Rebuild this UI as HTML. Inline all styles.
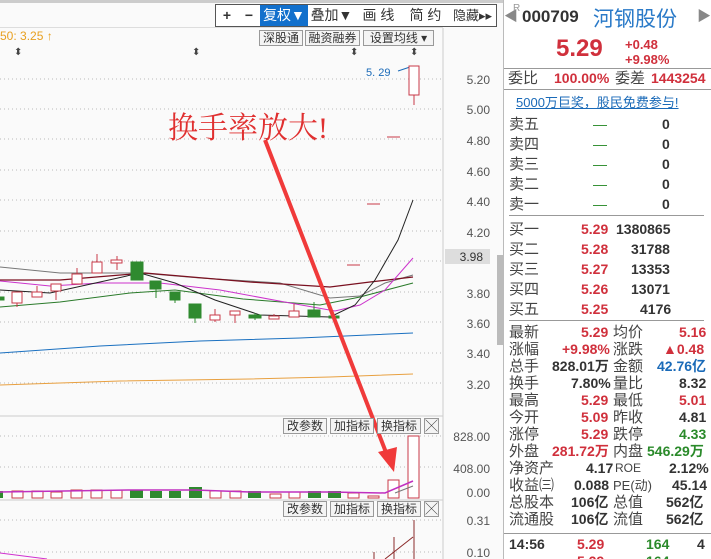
<!DOCTYPE html>
<html><head><meta charset="utf-8"><style>
*{margin:0;padding:0;box-sizing:border-box}
html,body{width:711px;height:559px;overflow:hidden}
body{background:#fafafa;font-family:"Liberation Sans","Noto Sans CJK SC",sans-serif;position:relative}
.a{position:absolute;white-space:nowrap}
.tb{position:absolute;top:4px;height:23px;border:1px solid #555;border-left:none;background:#fff;font-size:14px;color:#333;text-align:center;line-height:21px}
.sb{position:absolute;height:16px;border:1px solid #999;background:#f4f4f4;font-size:12px;color:#333;line-height:14px;text-align:center}
#rp{position:absolute;left:503px;top:0;width:208px;height:559px;background:#fff;border-left:1px solid #bbb;font-size:14px;overflow:hidden}
.r{position:absolute;left:5px;width:200px;height:17px;line-height:17px}
.r span{position:absolute}
.red{color:#d0303c;font-weight:bold}
.grn{color:#2a8a2a;font-weight:bold}
.blk{color:#333;font-weight:bold}
.lab{color:#444;font-size:15px}
</style></head><body>
<div class="a" style="left:0;top:0;width:503px;height:3px;background:#ccc"></div>
<div class="tb" style="left:215px;width:24px;border-left:1px solid #555;font-weight:bold">+</div>
<div class="tb" style="left:238px;width:23px;font-weight:bold">−</div>
<div class="tb" style="left:260px;width:49px;background:#1270cc;color:#fff">复权▼</div>
<div class="tb" style="left:308px;width:48px">叠加▼</div>
<div class="tb" style="left:355px;width:48px">画 线</div>
<div class="tb" style="left:402px;width:48px">简 约</div>
<div class="tb" style="left:449px;width:48px;font-size:13px">隐藏▸▸</div>
<div class="a" style="left:0;top:27px;width:443px;height:1px;background:#ddd"></div>
<div class="a" style="left:0;top:29px;font-size:12px;color:#e8a020">50: 3.25 ↑</div>
<div class="sb" style="left:259px;top:30px;width:44px">深股通</div>
<div class="sb" style="left:305px;top:30px;width:55px">融资融券</div>
<div class="sb" style="left:363px;top:30px;width:71px">设置均线 ▾</div>
<svg class="a" style="left:0;top:0" width="503" height="559">
<g fill="#444" font-size="10"><text x="14" y="55">⬍</text><text x="192" y="55">⬍</text><text x="350" y="55">⬍</text><text x="410" y="55">⬍</text></g>
<line x1="443" y1="28" x2="443" y2="559" stroke="#ccc"/>
<line x1="0" y1="416" x2="443" y2="416" stroke="#ccc"/><line x1="0" y1="500" x2="443" y2="500" stroke="#ccc"/>
<g stroke="#bbb" stroke-dasharray="1,3">
<line x1="0" y1="79" x2="443" y2="79"/><line x1="0" y1="109" x2="443" y2="109"/><line x1="0" y1="139" x2="443" y2="139"/><line x1="0" y1="170" x2="443" y2="170"/><line x1="0" y1="200" x2="443" y2="200"/><line x1="0" y1="231" x2="443" y2="231"/><line x1="0" y1="261" x2="443" y2="261"/><line x1="0" y1="292" x2="443" y2="292"/><line x1="0" y1="322" x2="443" y2="322"/><line x1="0" y1="353" x2="443" y2="353"/><line x1="0" y1="383" x2="443" y2="383"/>
<line x1="0" y1="436" x2="443" y2="436"/><line x1="0" y1="467" x2="443" y2="467"/><line x1="0" y1="520" x2="443" y2="520"/><line x1="0" y1="552" x2="443" y2="552"/></g>
<g font-size="12" fill="#555" text-anchor="end"><text x="490" y="84">5.20</text><text x="490" y="114">5.00</text><text x="490" y="145">4.80</text><text x="490" y="176">4.60</text><text x="490" y="206">4.40</text><text x="490" y="237">4.20</text><text x="490" y="298">3.80</text><text x="490" y="328">3.60</text><text x="490" y="358">3.40</text><text x="490" y="389">3.20</text><text x="490" y="441">828.00</text><text x="490" y="473">408.00</text><text x="490" y="497">0.00</text><text x="490" y="525">0.31</text><text x="490" y="557">0.10</text></g>
<rect x="445" y="249" width="45" height="15" fill="#ddd"/><text x="483" y="261" font-size="12" fill="#333" text-anchor="end">3.98</text>
<rect x="497" y="255" width="6" height="90" fill="#bbb"/>
<text x="366" y="76" font-size="11" fill="#1a6ab8">5. 29</text><path d="M398 71 L410 67" stroke="#1a6ab8"/>
<path d="M0 307 L60 302 L130 293 L175 290 L243 299 L320 305 L360 297 L413 283" stroke="#2a7a2a" fill="none"/>
<path d="M0 353 L100 346 L200 341 L300 338 L413 333" stroke="#1a70c0" fill="none"/>
<path d="M0 385 L120 381 L250 379 L330 377 L413 374" stroke="#e8a040" fill="none"/>
<path d="M0 267 L60 273 L140 273 L200 278 L280 283 L330 298 L360 296 L385 283 L413 275" stroke="#777" fill="none"/>
<path d="M0 280 L60 280 L145 273 L250 282 L330 287 L370 282 L413 277" stroke="#7a1020" stroke-width="1.3" fill="none"/>
<path d="M0 281 L50 286 L100 283 L160 283 L220 290 L290 303 L335 311 L360 305 L385 290 L413 258" stroke="#cc33cc" fill="none"/>
<path d="M0 290 L50 293 L100 282 L140 273 L175 283 L215 300 L260 315 L330 317 L355 305 L375 280 L398 240 L413 200" stroke="#222" fill="none"/>
<g stroke="#c83a48" fill="#fff">
<path d="M17 292V307M37 286V297M56 284V300M77 268V284M97 254V273M117 256V270M215 309V322M235 311V323M274 314V319M294 304V317M414 66V105"/>
<rect x="12" y="292" width="10" height="11"/><rect x="32" y="292" width="10" height="5"/><rect x="51" y="284" width="10" height="7"/><rect x="72" y="274" width="10" height="10"/><rect x="92" y="262" width="10" height="11"/><rect x="111" y="260" width="11" height="3"/><rect x="210" y="315" width="10" height="5"/><rect x="230" y="311" width="10" height="4"/><rect x="269" y="316" width="10" height="3"/><rect x="289" y="311" width="10" height="6"/><rect x="409" y="66" width="10" height="29"/>
<path d="M347 265H360M367 204H380M387 137H400"/></g>
<g stroke="#2f8a2f" fill="#2f8a2f">
<path d="M156 281V298M175 292V303M195 304V323M314 302V317M255 313V320"/>
<rect x="0" y="297" width="4" height="3"/><rect x="131" y="262" width="12" height="18"/><rect x="150" y="281" width="11" height="8"/><rect x="170" y="292" width="10" height="8"/><rect x="189" y="304" width="12" height="14"/><rect x="249" y="315" width="12" height="3"/><rect x="308" y="310" width="12" height="7"/><rect x="329" y="316" width="10" height="2"/></g>
<g fill="#fff" stroke="#c83a48"><rect x="12" y="491" width="11" height="7"/><rect x="32" y="491" width="11" height="7"/><rect x="51" y="492" width="11" height="6"/><rect x="71" y="490" width="11" height="8"/><rect x="91" y="490" width="11" height="8"/><rect x="111" y="490" width="11" height="8"/><rect x="210" y="491" width="11" height="7"/><rect x="230" y="491" width="11" height="7"/><rect x="270" y="494" width="11" height="4"/><rect x="289" y="492" width="11" height="6"/><rect x="348" y="493" width="11" height="5"/><rect x="368" y="496" width="11" height="2"/><rect x="388" y="480" width="11" height="18"/><rect x="408" y="436" width="11" height="62"/></g>
<g fill="#2f8a2f"><rect x="0" y="491" width="3" height="7"/><rect x="130" y="490" width="13" height="8"/><rect x="150" y="491" width="12" height="7"/><rect x="169" y="491" width="12" height="7"/><rect x="189" y="487" width="13" height="11"/><rect x="248" y="491" width="13" height="7"/><rect x="308" y="491" width="13" height="7"/><rect x="328" y="491" width="13" height="7"/></g>
<path d="M0 492 L130 490 L195 490 L250 492 L330 492 L385 493 L413 481" stroke="#c030c0" stroke-width="1.5" fill="none"/>
<path d="M395 493 L413 486" stroke="#777" fill="none"/>
<path d="M0 553 L47 559" stroke="#d030d0" fill="none"/>
<path d="M374 559V552M394 559V537M414 559V520M385 559 L413 537" stroke="#8a2a2a" fill="none"/>
<path d="M265 140 L387 455" stroke="#f03a3a" stroke-width="4" fill="none"/>
<path d="M378 452 L397 447 L394 472 Z" fill="#f03a3a"/>
<text x="168" y="138" font-size="30" fill="#e03030" font-family="Liberation Serif,Noto Serif CJK SC,serif">换手率放大!</text>
</svg>
<div class="sb" style="left:283px;top:418px;width:44px">改参数</div><div class="sb" style="left:330px;top:418px;width:44px">加指标</div><div class="sb" style="left:377px;top:418px;width:44px">换指标</div><div class="sb" style="left:424px;top:418px;width:15px">╳</div>
<div class="sb" style="left:283px;top:501px;width:44px">改参数</div><div class="sb" style="left:330px;top:501px;width:44px">加指标</div><div class="sb" style="left:377px;top:501px;width:44px">换指标</div><div class="sb" style="left:424px;top:501px;width:15px">╳</div>

<div id="rp">
<div class="a" style="left:0;top:6px;font-size:14px;color:#888">◀</div>
<div class="a" style="left:9px;top:3px;font-size:10px;color:#999">R</div>
<div class="a" style="left:18px;top:7px;font-size:17px;font-weight:bold;color:#333">000709</div>
<div class="a" style="left:89px;top:3px;font-size:21px;color:#2a7ac8">河钢股份</div>
<div class="a" style="left:193px;top:6px;font-size:14px;color:#888">▶</div>
<div class="a" style="left:52px;top:35px;font-size:24px;font-weight:bold;color:#d0303c">5.29</div>
<div class="a" style="left:121px;top:37px;font-size:13px;font-weight:bold;color:#d0303c;line-height:15px">+0.48<br>+9.98%</div>
<div class="a" style="left:0;top:68px;width:208px;height:1px;background:#999"></div>
<div class="r" style="top:70px;left:4px"><span class="lab">委比</span><span class="red" style="left:46px">100.00%</span><span class="lab" style="left:107px">委差</span><span class="red" style="left:143px">1443254</span></div>
<div class="a" style="left:0;top:89px;width:208px;height:1px;background:#999"></div>
<div class="a" style="left:12px;top:92px;font-size:13px;color:#1a6ab8;text-decoration:underline">5000万巨奖，股民免费参与!</div>
<div class="r" style="top:116px"><span class="lab">卖五</span><span style="left:84px;color:#2a8a2a">—</span><span class="blk" style="left:153px">0</span></div>
<div class="r" style="top:136px"><span class="lab">卖四</span><span style="left:84px;color:#2a8a2a">—</span><span class="blk" style="left:153px">0</span></div>
<div class="r" style="top:156px"><span class="lab">卖三</span><span style="left:84px;color:#2a8a2a">—</span><span class="blk" style="left:153px">0</span></div>
<div class="r" style="top:176px"><span class="lab">卖二</span><span style="left:84px;color:#2a8a2a">—</span><span class="blk" style="left:153px">0</span></div>
<div class="r" style="top:196px"><span class="lab">卖一</span><span style="left:84px;color:#2a8a2a">—</span><span class="blk" style="left:153px">0</span></div>
<div class="a" style="left:5px;top:215px;width:195px;height:1px;background:#999"></div>
<div class="r" style="top:221px"><span class="lab">买一</span><span class="red" style="left:72px">5.29</span><span class="blk" style="left:107px">1380865</span></div>
<div class="r" style="top:241px"><span class="lab">买二</span><span class="red" style="left:72px">5.28</span><span class="blk" style="left:122px">31788</span></div>
<div class="r" style="top:261px"><span class="lab">买三</span><span class="red" style="left:72px">5.27</span><span class="blk" style="left:122px">13353</span></div>
<div class="r" style="top:281px"><span class="lab">买四</span><span class="red" style="left:72px">5.26</span><span class="blk" style="left:122px">13071</span></div>
<div class="r" style="top:301px"><span class="lab">买五</span><span class="red" style="left:72px">5.25</span><span class="blk" style="left:131px">4176</span></div>
<div class="a" style="left:5px;top:320px;width:195px;height:1px;background:#999"></div>
<div class="r" style="top:324px"><span class="lab">最新</span><span class="red" style="left:72px">5.29</span><span class="lab" style="left:104px">均价</span><span class="red" style="left:170px">5.16</span></div>
<div class="r" style="top:341px"><span class="lab">涨幅</span><span class="red" style="left:53px">+9.98%</span><span class="lab" style="left:104px">涨跌</span><span class="red" style="left:154px">▲0.48</span></div>
<div class="r" style="top:358px"><span class="lab">总手</span><span class="blk" style="left:43px">828.01万</span><span class="lab" style="left:104px">金额</span><span style="left:148px;color:#1a6ab8;font-weight:bold">42.76亿</span></div>
<div class="r" style="top:375px"><span class="lab">换手</span><span class="blk" style="left:62px">7.80%</span><span class="lab" style="left:104px">量比</span><span class="blk" style="left:170px">8.32</span></div>
<div class="r" style="top:392px"><span class="lab">最高</span><span class="red" style="left:72px">5.29</span><span class="lab" style="left:104px">最低</span><span class="red" style="left:170px">5.01</span></div>
<div class="r" style="top:409px"><span class="lab">今开</span><span class="red" style="left:72px">5.09</span><span class="lab" style="left:104px">昨收</span><span class="blk" style="left:170px">4.81</span></div>
<div class="r" style="top:426px"><span class="lab">涨停</span><span class="red" style="left:72px">5.29</span><span class="lab" style="left:104px">跌停</span><span class="grn" style="left:170px">4.33</span></div>
<div class="r" style="top:443px"><span class="lab">外盘</span><span class="red" style="left:43px">281.72万</span><span class="lab" style="left:104px">内盘</span><span class="grn" style="left:138px">546.29万</span></div>
<div class="r" style="top:460px"><span class="lab">净资产</span><span class="blk" style="left:77px">4.17</span><span class="lab" style="left:106px;font-size:12px">ROE</span><span class="blk" style="left:160px">2.12%</span></div>
<div class="r" style="top:477px"><span class="lab">收益㈢</span><span class="blk" style="left:65px">0.088</span><span class="lab" style="left:104px;font-size:13px">PE(动)</span><span class="blk" style="left:163px">45.14</span></div>
<div class="r" style="top:494px"><span class="lab">总股本</span><span class="blk" style="left:62px">106亿</span><span class="lab" style="left:104px">总值</span><span class="blk" style="left:157px">562亿</span></div>
<div class="r" style="top:511px"><span class="lab">流通股</span><span class="blk" style="left:62px">106亿</span><span class="lab" style="left:104px">流值</span><span class="blk" style="left:157px">562亿</span></div>
<div class="a" style="left:0;top:533px;width:208px;height:1px;background:#999"></div>
<div class="r" style="top:536px"><span class="blk">14:56</span><span class="red" style="left:68px">5.29</span><span class="grn" style="left:137px">164</span><span class="blk" style="left:188px">4</span></div>
<div class="r" style="top:553px"><span class="red" style="left:68px">5.29</span><span class="grn" style="left:137px">164</span></div>
</div>
</body></html>
